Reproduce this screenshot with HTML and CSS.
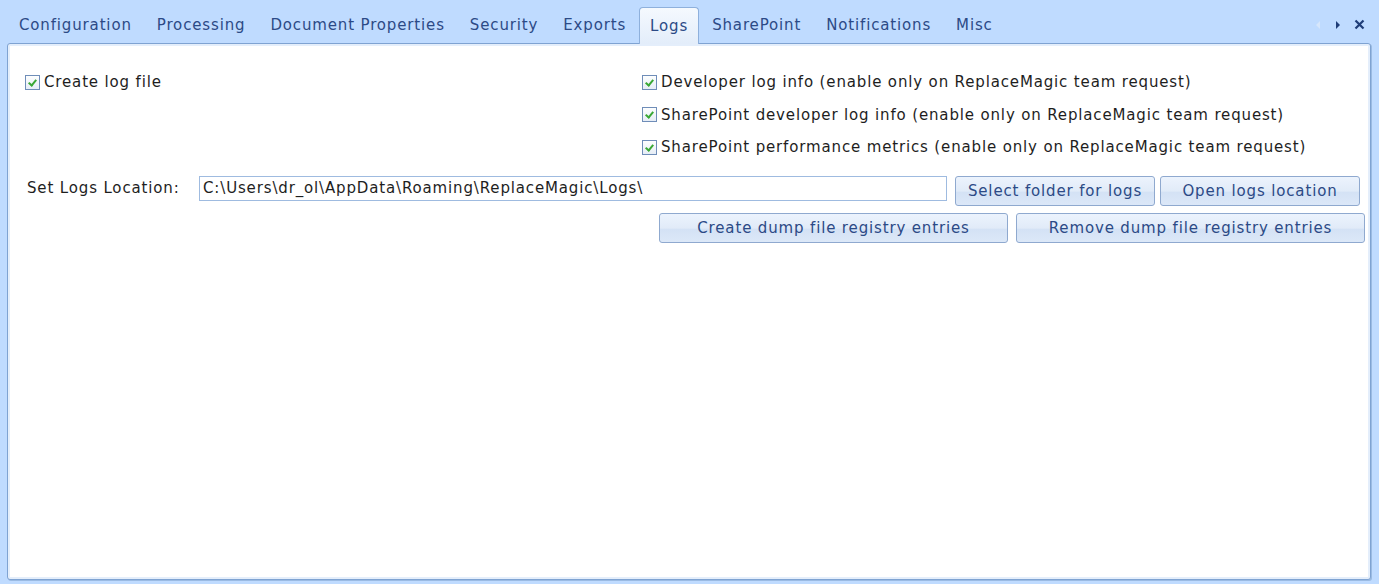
FILE: index.html
```html
<!DOCTYPE html>
<html lang="en">

<head>
  <meta charset="UTF-8">
  <title>Logs</title>
  <link rel="stylesheet" href="styles.css">
</head>

<body>
  <div class="tab-bar">
    <div class="tab">Configuration</div>
    <div class="tab">Processing</div>
    <div class="tab">Document Properties</div>
    <div class="tab">Security</div>
    <div class="tab">Exports</div>
    <div class="tab active">Logs</div>
    <div class="tab">SharePoint</div>
    <div class="tab">Notifications</div>
    <div class="tab">Misc</div>
    <div class="tab-tools">
      <svg width="8" height="10" viewBox="0 0 8 10"><path d="M6 1 L2 5 L6 9 Z" fill="#d6e6fb" /></svg>
      <svg width="8" height="10" viewBox="0 0 8 10"><path d="M2 1 L6 5 L2 9 Z" fill="#1f3d78" /></svg>
      <svg width="11" height="11" viewBox="0 0 11 11"><path d="M1.5 1.5 L9.5 9.5 M9.5 1.5 L1.5 9.5" stroke="#1f3d78" stroke-width="2.2" /></svg>
    </div>
  </div>
  <div class="panel">
    <div class="panel-inner">
      <div class="check-rows">
        <div class="left-col">
          <label class="check"><span class="box"></span>Create log file</label>
        </div>
        <div class="right-col">
          <label class="check"><span class="box"></span>Developer log info (enable only on ReplaceMagic team request)</label>
          <label class="check"><span class="box"></span>SharePoint developer log info (enable only on ReplaceMagic team request)</label>
          <label class="check"><span class="box"></span>SharePoint performance metrics (enable only on ReplaceMagic team request)</label>
        </div>
      </div>
      <div class="location-row">
        <span class="loc-label">Set Logs Location:</span>
        <div class="loc-input">C:\Users\dr_ol\AppData\Roaming\ReplaceMagic\Logs\</div>
        <button class="btn btn-folder">Select folder for logs</button>
        <button class="btn btn-open">Open logs location</button>
      </div>
      <div class="dump-row">
        <button class="btn btn-dump">Create dump file registry entries</button>
        <button class="btn btn-dump">Remove dump file registry entries</button>
      </div>
    </div>
  </div>
</body>

</html>
```

FILE: styles.css
```css
* {
  box-sizing: border-box;
  padding: 0;
  margin: 0;
}

html,
body {
  width: 100%;
  height: 100%;
}

body {
  background-color: #bfdbff;
  font-family: "DejaVu Sans", Verdana, sans-serif;
  font-size: 15px;
  letter-spacing: 0.85px;
  color: #1e1e1e;
  display: flex;
  flex-direction: column;
  padding: 0 8px 4px 7px;
}

.tab-bar {
  height: 43px;
  display: flex;
  align-items: flex-end;
}

.tab {
  height: 37px;
  line-height: 37px;
  padding: 0 11px;
  margin-right: 1px;
  color: #2c4a86;
  border: 1px solid transparent;
  border-bottom: none;
  border-radius: 4px 4px 0 0;
}

.tab.active {
  background: linear-gradient(#f5f9fe, #e3edfa);
  border-color: #8eb0dc;
  padding: 0 10px;
  position: relative;
  top: 1px;
}

.tab-tools {
  margin-left: auto;
  height: 37px;
  display: flex;
  align-items: center;
  gap: 12px;
  padding-right: 6px;
}

.panel {
  flex: 1;
  border: 1px solid #7fa3d2;
  border-radius: 3px;
  background-color: #e4eefb;
  padding: 2px;
  box-shadow: 1px 1px 0 #9bbbe3;
}

.panel-inner {
  height: 100%;
  background-color: #fff;
  padding: 26px 6px 0 15px;
}

.check-rows {
  display: flex;
}

.left-col {
  width: 617px;
}

.right-col {
  display: flex;
  flex-direction: column;
  gap: 12.5px;
}

.check {
  display: flex;
  align-items: center;
  height: 20px;
  white-space: nowrap;
}

.box {
  flex: none;
  width: 15px;
  height: 15px;
  margin-right: 4px;
  border: 1px solid #6f8db8;
  background: linear-gradient(#fdfefe, #e6edf6);
  position: relative;
}

.box::after {
  content: "";
  position: absolute;
  left: 4px;
  top: 2px;
  width: 3px;
  height: 6px;
  border: solid #3aa835;
  border-width: 0 2px 2px 0;
  transform: rotate(40deg);
}

.location-row {
  display: flex;
  align-items: flex-start;
  margin-top: 19px;
}

.loc-label {
  width: 174px;
  padding-left: 2px;
  line-height: 25px;
}

.loc-input {
  width: 748px;
  height: 25px;
  line-height: 23px;
  border: 1px solid #9fbbe0;
  padding: 0 3px;
  margin-right: 8px;
}

.btn {
  font-family: inherit;
  font-size: 15px;
  letter-spacing: 0.85px;
  color: #2c4a86;
  height: 30px;
  border: 1px solid #8fa9cf;
  border-radius: 3px;
  background: linear-gradient(#ecf3fd 0%, #e1ebf8 50%, #d4e2f5 55%, #dce8f8 100%);
}

.btn-folder {
  width: 200px;
  margin-right: 5px;
}

.btn-open {
  width: 200px;
}

.dump-row {
  display: flex;
  justify-content: flex-end;
  gap: 8px;
  margin-top: 7px;
  margin-right: -3px;
}

.btn-dump {
  width: 349px;
  height: 30px;
}
```
